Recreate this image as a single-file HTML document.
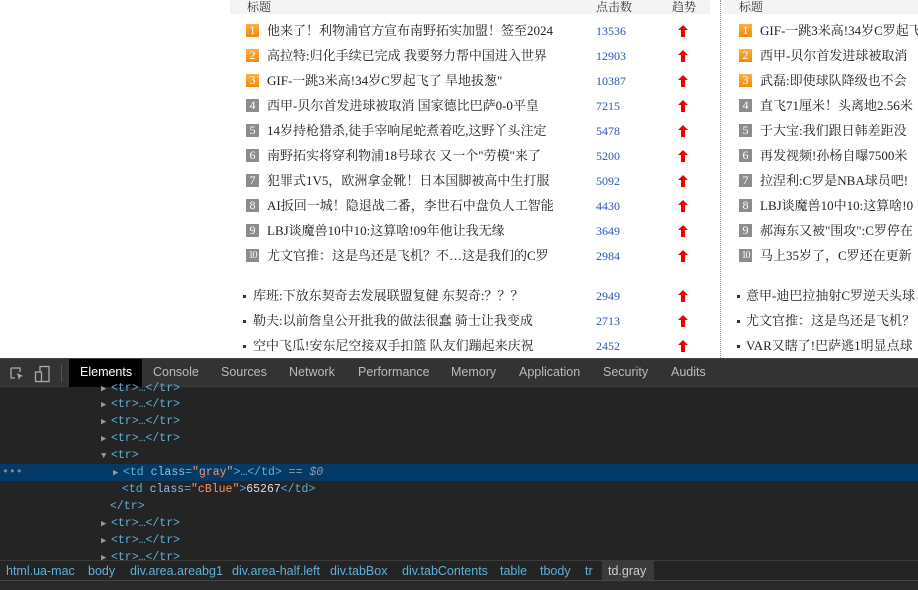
<!DOCTYPE html>
<html><head><meta charset="utf-8"><style>
*{margin:0;padding:0;box-sizing:border-box}
body{width:918px;height:590px;overflow:hidden;background:#fff;position:relative;font-family:"Liberation Serif","Noto Serif CJK SC",serif;}
.hd{position:absolute;top:0;height:14px;background:#f4f4f4;}
.h{position:absolute;font-size:12px;color:#333;top:0px;line-height:14px}
.row{position:absolute;height:25px;line-height:26px;font-size:13px;color:#222;white-space:nowrap}
.b{position:absolute;width:13px;height:13px;top:6px;font-size:12px;line-height:13px;text-align:center;color:#fff;font-family:"Liberation Serif",serif}
.o{background:linear-gradient(#fbb040,#f08a10)}
.g{background:#8c8c8c}
.t{position:absolute;overflow:hidden}
.n{position:absolute;left:596px;font-size:12px;color:#2d55b8}
.ar{position:absolute;left:678px;top:7px;width:10px;height:12px}
.dot{position:absolute;width:3px;height:3px;background:#333;top:12px}
.dl{position:absolute;left:720px;top:0;height:358px;border-left:1px dotted #999}
.dev{position:absolute;left:0;top:358px;width:918px;height:232px;background:#242424;font-family:"Liberation Sans",sans-serif}
.tb{position:absolute;left:0;top:0;width:918px;height:29px;background:#333;border-top:1px solid #444;border-bottom:1px solid #3c3c3c}
.tab{position:absolute;top:6px;font-size:12.5px;color:#bbb}
.el{position:absolute;left:69px;top:0;width:73px;height:28px;background:#000}
.ln{position:absolute;font-family:"Liberation Mono",monospace;font-size:11.5px;color:#5db0d7;white-space:pre;line-height:17px}
.tri{color:#999;font-size:9px;display:inline-block;width:10px}
.sel{position:absolute;left:0;top:106px;width:918px;height:17px;background:#043a66}
.bc{position:absolute;left:0;top:202px;width:918px;height:21px;background:#242424;border-top:1px solid #3a3a3a;font-size:12.5px;color:#5db0d7}
.bc span{position:absolute;top:3px}
</style></head><body>
<div class="hd" style="left:230px;width:480px"></div>
<div class="hd" style="left:724px;width:194px"></div>
<div class="h" style="left:247px">标题</div>
<div class="h" style="left:596px">点击数</div>
<div class="h" style="left:672px">趋势</div>
<div class="h" style="left:739px">标题</div>
<div class="dl"></div>

<div id="rows"></div>
<svg width="0" height="0" style="position:absolute"><defs><symbol id="arw" viewBox="0 0 10 12"><path d="M5 0L10 5H7V12H3V5H0Z" fill="#e00"/></symbol></defs></svg>
<script>
var L=[["他来了！利物浦官方宣布南野拓实加盟！签至2024","13536"],["高拉特:归化手续已完成 我要努力帮中国进入世界","12903"],["GIF-一跳3米高!34岁C罗起飞了 旱地拔葱\"","10387"],["西甲-贝尔首发进球被取消 国家德比巴萨0-0平皇","7215"],["14岁持枪猎杀,徒手宰响尾蛇煮着吃,这野丫头注定","5478"],["南野拓实将穿利物浦18号球衣 又一个\"劳模\"来了","5200"],["犯罪式1V5，欧洲拿金靴！日本国脚被高中生打服","5092"],["AI扳回一城！隐退战二番，李世石中盘负人工智能","4430"],["LBJ谈魔兽10中10:这算啥!09年他让我无缘","3649"],["尤文官推：这是鸟还是飞机？不…这是我们的C罗","2984"]];
var R=["GIF-一跳3米高!34岁C罗起飞了","西甲-贝尔首发进球被取消","武磊:即使球队降级也不会","直飞71厘米！头离地2.56米","于大宝:我们跟日韩差距没","再发视频!孙杨自曝7500米","拉涅利:C罗是NBA球员吧!","LBJ谈魔兽10中10:这算啥!0","郝海东又被\"围攻\":C罗停在","马上35岁了，C罗还在更新"];
var B=[["库班:下放东契奇去发展联盟复健 东契奇:？？？","2949"],["勒夫:以前詹皇公开批我的做法很蠢 骑士让我变成","2713"],["空中飞瓜!安东尼空接双手扣篮 队友们蹦起来庆祝","2452"]];
var RB=["意甲-迪巴拉抽射C罗逆天头球","尤文官推：这是鸟还是飞机？","VAR又瞎了!巴萨逃1明显点球"];
var h="";
for(var i=0;i<10;i++){var y=18+i*25,c=i<3?"o":"g",fs=i==9?'style="left:%px;font-size:10px;letter-spacing:-1px"':'style="left:%px"';
h+='<div class="row" style="left:0;top:'+y+'px;width:918px"><div class="b '+c+'" '+fs.replace('%',246)+'>'+(i+1)+'</div><div class="t" style="left:267px;width:320px">'+L[i][0]+'</div><div class="n">'+L[i][1]+'</div><svg class="ar"><use href="#arw"/></svg><div class="b '+c+'" '+fs.replace('%',739)+'>'+(i+1)+'</div><div class="t" style="left:760px;width:158px">'+R[i]+'</div></div>';}
for(var j=0;j<3;j++){var y=283+j*25;
h+='<div class="row" style="left:0;top:'+y+'px;width:918px"><div class="dot" style="left:243px"></div><div class="t" style="left:253px;width:334px">'+B[j][0]+'</div><div class="n">'+B[j][1]+'</div><svg class="ar"><use href="#arw"/></svg><div class="dot" style="left:737px"></div><div class="t" style="left:746px;width:172px">'+RB[j]+'</div></div>';}
document.getElementById("rows").innerHTML=h;
</script>

<div class="dev">
<div class="tb">
<svg style="position:absolute;left:9px;top:7px" width="16" height="16" viewBox="0 0 16 16"><path d="M2 2h9v4M2 2v10h4" fill="none" stroke="#aaa" stroke-width="1.3"/><path d="M8 7l6 3-3 1-1 3z" fill="#aaa"/></svg>
<svg style="position:absolute;left:34px;top:6px" width="18" height="18" viewBox="0 0 18 18"><rect x="6" y="1.5" width="9" height="15" fill="none" stroke="#aaa" stroke-width="1.3"/><rect x="1.5" y="7" width="6" height="9.5" fill="#333" stroke="#aaa" stroke-width="1.3"/></svg>
<div style="position:absolute;left:61px;top:6px;width:1px;height:17px;background:#555"></div>
<div class="el"></div>
<div class="tab" style="left:80px;color:#fff">Elements</div>
<div class="tab" style="left:153px">Console</div>
<div class="tab" style="left:221px">Sources</div>
<div class="tab" style="left:289px">Network</div>
<div class="tab" style="left:358px">Performance</div>
<div class="tab" style="left:451px">Memory</div>
<div class="tab" style="left:519px">Application</div>
<div class="tab" style="left:603px">Security</div>
<div class="tab" style="left:671px">Audits</div>
</div>
<div class="sel"></div>
<div class="ln" style="left:101px;top:22px"><span class="tri">▶</span>&lt;tr&gt;…&lt;/tr&gt;</div>
<div class="ln" style="left:101px;top:38px"><span class="tri">▶</span>&lt;tr&gt;…&lt;/tr&gt;</div>
<div class="ln" style="left:101px;top:55px"><span class="tri">▶</span>&lt;tr&gt;…&lt;/tr&gt;</div>
<div class="ln" style="left:101px;top:72px"><span class="tri">▶</span>&lt;tr&gt;…&lt;/tr&gt;</div>
<div class="ln" style="left:101px;top:89px"><span class="tri">▼</span>&lt;tr&gt;</div>
<div class="ln" style="left:2px;top:106px;color:#888">•••</div>
<div class="ln" style="left:113px;top:106px"><span class="tri">▶</span>&lt;td <span style="color:#9bbbdc">class</span>=<span style="color:#f29766">"gray"</span>&gt;…&lt;/td&gt; <span style="color:#999">== <i>$0</i></span></div>
<div class="ln" style="left:122px;top:123px">&lt;td <span style="color:#9bbbdc">class</span>=<span style="color:#f29766">"cBlue"</span>&gt;<span style="color:#ddd">65267</span>&lt;/td&gt;</div>
<div class="ln" style="left:110px;top:140px">&lt;/tr&gt;</div>
<div class="ln" style="left:101px;top:157px"><span class="tri">▶</span>&lt;tr&gt;…&lt;/tr&gt;</div>
<div class="ln" style="left:101px;top:174px"><span class="tri">▶</span>&lt;tr&gt;…&lt;/tr&gt;</div>
<div class="ln" style="left:101px;top:191px"><span class="tri">▶</span>&lt;tr&gt;…&lt;/tr&gt;</div>
<div class="bc">
<span style="left:6px">html.ua-mac</span><span style="left:88px">body</span><span style="left:130px">div.area.areabg1</span><span style="left:232px">div.area-half.left</span><span style="left:330px">div.tabBox</span><span style="left:402px">div.tabContents</span><span style="left:500px">table</span><span style="left:540px">tbody</span><span style="left:585px">tr</span>
<div style="position:absolute;left:602px;top:0;width:52px;height:21px;background:#3a3a3a"></div><span style="left:608px;color:#ccc">td.gray</span>
</div>
<div style="position:absolute;left:0;top:222px;width:918px;height:10px;background:#2a2a2a;border-top:1px solid #444"></div>
</div>
</body></html>
